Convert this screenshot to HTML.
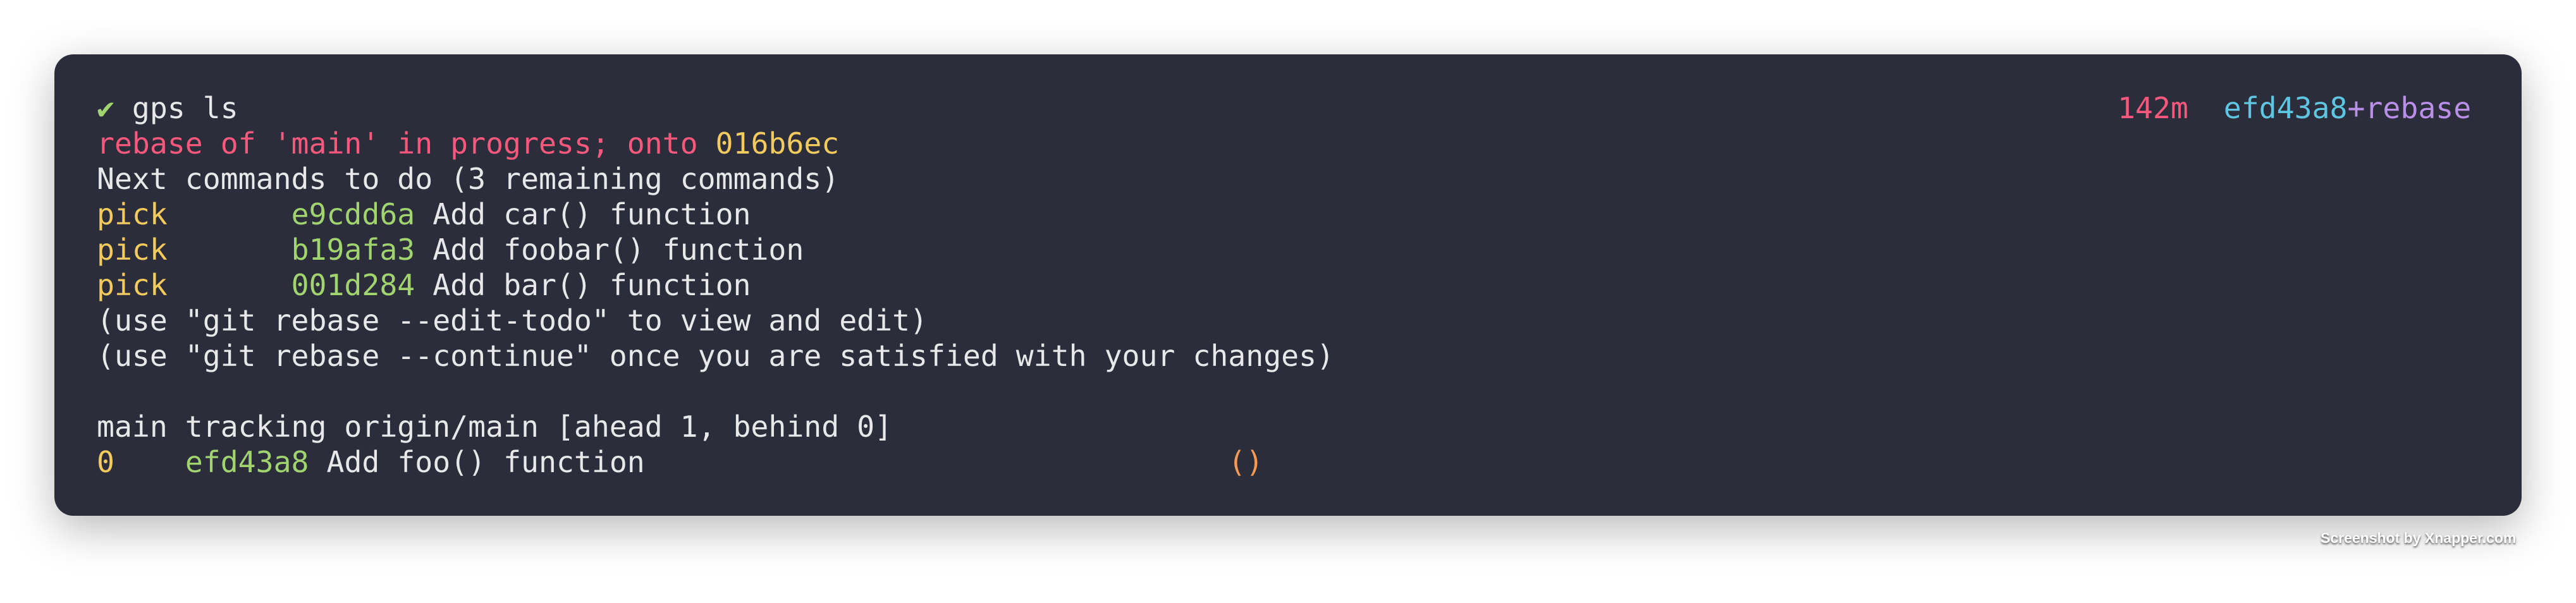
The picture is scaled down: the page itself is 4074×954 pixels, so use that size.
<!DOCTYPE html>
<html><head><meta charset="utf-8"><style>
html,body{margin:0;padding:0;width:4074px;height:954px;background:#fff;overflow:hidden}
.card{position:absolute;left:86px;top:86px;width:3902px;height:730px;background:#2b2d3b;border-radius:30px;box-shadow:0 20px 70px rgba(0,0,0,0.28)}
pre{position:absolute;left:153px;top:143px;margin:0;font-family:"DejaVu Sans Mono","Liberation Mono",monospace;font-size:46.45px;line-height:56px;color:#e8e8ea;white-space:pre}
.r{color:#f7587c}.y{color:#f2ca5e}.g{color:#a1d46f}.c{color:#5fc6e2}.p{color:#b98fe8}.o{color:#f49a55}
.rt{position:absolute;left:3349px;top:143px;margin:0;font-family:"DejaVu Sans Mono","Liberation Mono",monospace;font-size:46.45px;line-height:56px;white-space:pre}
.wm{position:absolute;left:3670px;top:838px;font-family:"Liberation Sans",sans-serif;font-weight:bold;font-size:23px;color:#fff;text-shadow:0 2px 3px rgba(0,0,0,0.7)}
</style></head><body>
<div class="card"></div>
<pre><span class="g">✔</span> gps ls
<span class="r">rebase of 'main' in progress; onto </span><span class="y">016b6ec</span>
Next commands to do (3 remaining commands)
<span class="y">pick</span>       <span class="g">e9cdd6a</span> Add car() function
<span class="y">pick</span>       <span class="g">b19afa3</span> Add foobar() function
<span class="y">pick</span>       <span class="g">001d284</span> Add bar() function
(use "git rebase --edit-todo" to view and edit)
(use "git rebase --continue" once you are satisfied with your changes)

main tracking origin/main [ahead 1, behind 0]
<span class="y">0</span>    <span class="g">efd43a8</span> Add foo() function                                 <span class="o">()</span></pre>
<div class="rt"><span class="r">142m</span>  <span class="c">efd43a8</span><span class="p">+rebase</span></div>
<div class="wm">Screenshot by Xnapper.com</div>
</body></html>
